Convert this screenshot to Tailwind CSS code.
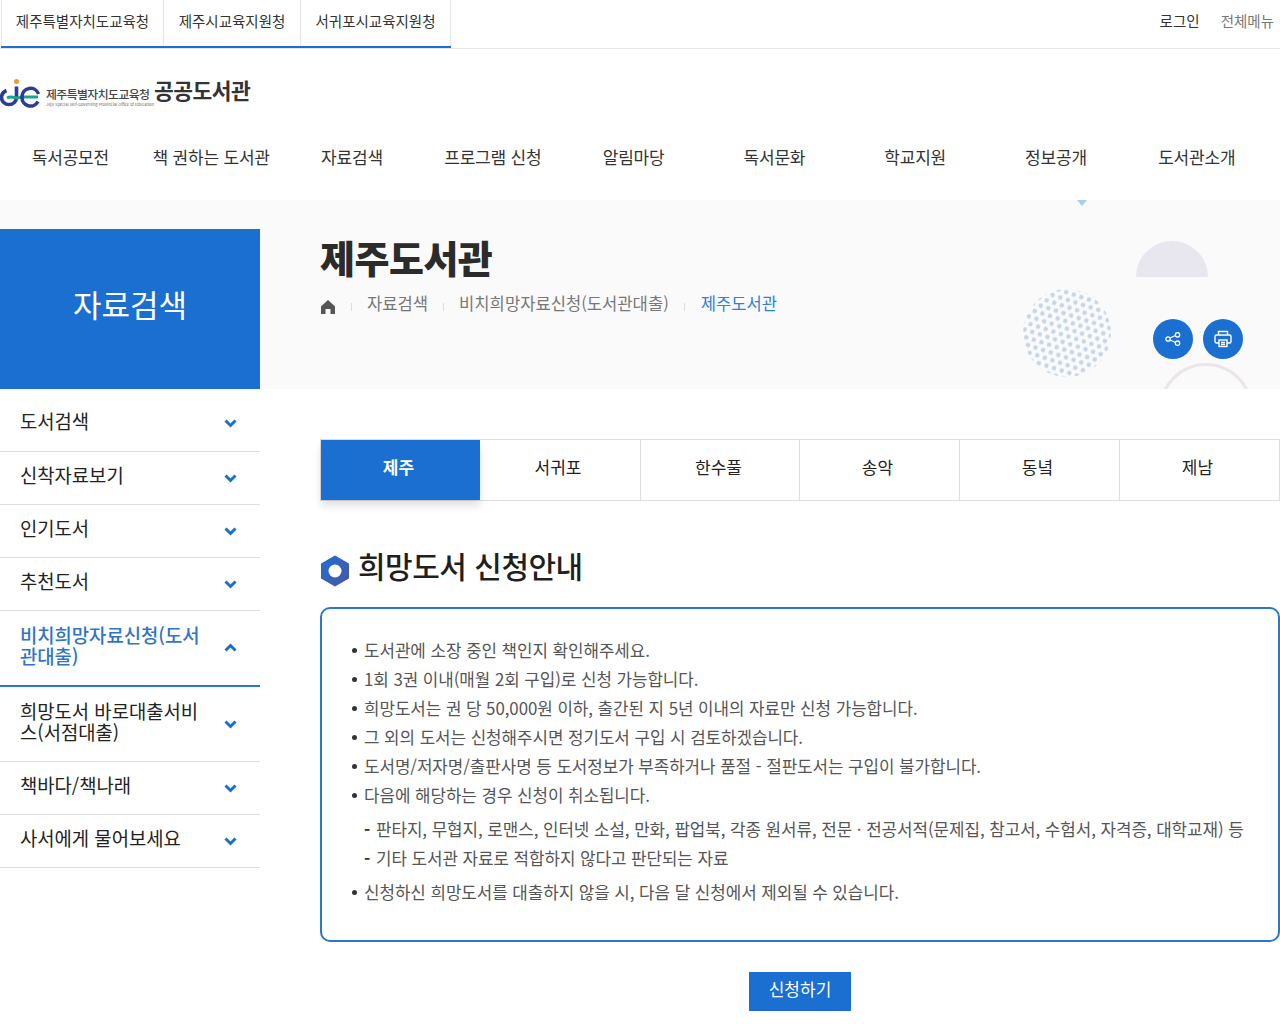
<!DOCTYPE html>
<html lang="ko">
<head>
<meta charset="UTF-8">
<title>제주도서관</title>
<script src="https://cdn.jsdelivr.net/npm/@tailwindcss/browser@4"></script>
</head>
<body class="bg-white font-['Noto_Sans_CJK_KR','Noto_Sans',sans-serif] text-[#222] overflow-hidden">
<div class="w-[1280px] h-[1024px] overflow-hidden">
  <!-- top bar -->
  <div class="h-[49px] border-b border-[#e8e8e8] flex justify-between">
    <div class="flex h-[48px] ml-[1px] border-b-2 border-[#1a6fd0] text-[14.5px] text-[#333]">
      <a class="w-[163px] border-r border-[#e5e5e5] border-l flex items-center justify-center pb-[5px]">제주특별자치도교육청</a>
      <a class="w-[137px] border-r border-[#e5e5e5] flex items-center justify-center pb-[5px]">제주시교육지원청</a>
      <a class="w-[150px] border-r border-[#e5e5e5] flex items-center justify-center pb-[5px]">서귀포시교육지원청</a>
    </div>
    <div class="flex gap-[21px] items-center pb-[7px] text-[14.5px] pr-[6px]">
      <a class="text-[#333]">로그인</a>
      <a class="text-[#777]">전체메뉴</a>
    </div>
  </div>
  <!-- logo -->
  <div class="h-[87px] flex items-center pb-[2px]">
    <svg width="42" height="30" viewBox="0 78 42 30" class="mt-[2px]">
      <circle cx="16.500" cy="81.500" r="2.500" fill="#f09a2c"/>
      <path d="M16.500 86.500v11a7.500 7 0 1 1-15 0c0-3 1.500-5.500 5-7" fill="none" stroke="#2a3c96" stroke-width="3.600"/>
      <path d="M7 98c6-3 9 2 14-1h17" fill="none" stroke="#17a58c" stroke-width="3"/>
      <path d="M22 97a8.500 8.500 0 0 1 16.500-3M22 97a8.500 8.500 0 0 0 16 4.500" fill="none" stroke="#2a3c96" stroke-width="3.600"/>
    </svg>
    <div class="ml-[4px] w-[104px] mt-[10px]">
      <div class="text-[11.900px] leading-[14px] font-medium text-[#444] whitespace-nowrap tracking-[-0.6px]">제주특별자치도교육청</div>
      <div class="text-[4px] leading-[6px] text-[#666] whitespace-nowrap">Jeju Special Self-Governing Provincial Office of Education</div>
    </div>
    <span class="ml-[4px] text-[21.500px] font-bold text-[#333] -mt-[2px] tracking-[-0.5px]">공공도서관</span>
  </div>
  <!-- main nav -->
  <div class="h-[64px] flex items-start text-[17px] tracking-[-0.2px] text-[#333] pt-[8px]">
    <a class="w-[140.800px] text-center">독서공모전</a>
    <a class="w-[140.800px] text-center">책 권하는 도서관</a>
    <a class="w-[140.800px] text-center">자료검색</a>
    <a class="w-[140.800px] text-center">프로그램 신청</a>
    <a class="w-[140.800px] text-center">알림마당</a>
    <a class="w-[140.800px] text-center">독서문화</a>
    <a class="w-[140.800px] text-center">학교지원</a>
    <a class="w-[140.800px] text-center">정보공개</a>
    <a class="w-[140.800px] text-center">도서관소개</a>
  </div>
  <!-- hero -->
  <div class="relative h-[189px] bg-[#fafafb] flex">
    <div class="w-[260px] h-[160px] mt-[29px] bg-[#1a6fd0] text-white text-[31px] flex items-center justify-center pb-[10px]">자료검색</div>
    <div class="pl-[60px] pt-[32px]">
      <h1 class="text-[38px] leading-[50px] font-black text-[#2b2b2b] tracking-[-0.5px]">제주도서관</h1>
      <div class="flex items-center mt-[9px] text-[16.600px] text-[#777] leading-[24px]">
        <svg width="16" height="16" viewBox="0 0 16 16" class="mt-[7px]"><path d="M8 1 1 7.500V15h4.500v-5h5v5H15V7.500Z" fill="#555"/></svg>
        <span class="w-px h-[8px] bg-[#ddd] mx-[15px] mt-[7px]"></span>
        <span>자료검색</span>
        <span class="w-px h-[8px] bg-[#ddd] mx-[15px] mt-[7px]"></span>
        <span>비치희망자료신청(도서관대출)</span>
        <span class="w-px h-[8px] bg-[#ddd] mx-[15.500px] mt-[7px]"></span>
        <span class="text-[#2f80dd]">제주도서관</span>
      </div>
    </div>
    <!-- decorations -->
    <svg width="10" height="6" viewBox="0 0 10 6" class="absolute left-[1077px] top-0"><path d="M0 0h10L5 6Z" fill="#a9cdea"/></svg>
    <div class="absolute left-[1136px] top-[41px] w-[72px] h-[36px] rounded-t-full bg-[#e8e6ee]"></div>
    <svg width="88" height="88" viewBox="0 0 88 88" class="absolute left-[1023px] top-[89px]">
      <defs>
        <pattern id="dots" width="8" height="13.800" patternUnits="userSpaceOnUse" patternTransform="rotate(18)">
          <circle cx="2" cy="3.450" r="2.300" fill="#c4d6e8"/>
          <circle cx="6" cy="10.350" r="2.300" fill="#c4d6e8"/>
        </pattern>
      </defs>
      <circle cx="44" cy="44" r="44" fill="url(#dots)"/>
    </svg>
    <div class="absolute left-[1159px] top-[163px] w-[94px] h-[26px] overflow-hidden"><div class="w-[94px] h-[94px] rounded-full border-[3px] border-[#ebe6ea]"></div></div>
    <div class="absolute left-[1153px] top-[119px] w-[40px] h-[40px] rounded-full bg-[#1a6fd0] flex items-center justify-center">
      <svg width="16" height="14" viewBox="0 0 16 14" fill="none" stroke="white" stroke-width="1.300"><circle cx="3" cy="7" r="2.200"/><circle cx="12.500" cy="2.800" r="2.200"/><circle cx="12.500" cy="11.200" r="2.200"/><path d="M5 6 10.500 3.500M5 8l5.500 2.500"/></svg>
    </div>
    <div class="absolute left-[1203px] top-[119px] w-[40px] h-[40px] rounded-full bg-[#1a6fd0] flex items-center justify-center">
      <svg width="18" height="18" viewBox="0 0 18 18" fill="none" stroke="white" stroke-width="1.400"><path d="M4.500 5V1.500h9V5"/><rect x="1" y="5" width="16" height="8" rx="1.500"/><rect x="5" y="10" width="8" height="6.500" fill="#1a6fd0"/><path d="M7 12.500h4M7 14.500h4"/></svg>
    </div>
  </div>
  <!-- body -->
  <div class="flex">
    <div class="w-[260px] text-[18.800px] leading-[21px] shrink-0">
      <div class="h-[63px] border-b border-[#ddd] flex items-center justify-between pl-[20px] pr-[23px] pt-[7px]"><span class="mb-[6px]">도서검색</span><svg width="13" height="9" viewBox="0 0 13 9" fill="none" stroke="#1a6fd0" stroke-width="3"><path d="M1.500 1.500 6.500 6.500l5-5"/></svg></div>
      <div class="h-[53px] border-b border-[#ddd] flex items-center justify-between pl-[20px] pr-[23px]"><span class="mb-[7px]">신착자료보기</span><svg width="13" height="9" viewBox="0 0 13 9" fill="none" stroke="#1a6fd0" stroke-width="3"><path d="M1.500 1.500 6.500 6.500l5-5"/></svg></div>
      <div class="h-[53px] border-b border-[#ddd] flex items-center justify-between pl-[20px] pr-[23px]"><span class="mb-[7px]">인기도서</span><svg width="13" height="9" viewBox="0 0 13 9" fill="none" stroke="#1a6fd0" stroke-width="3"><path d="M1.500 1.500 6.500 6.500l5-5"/></svg></div>
      <div class="h-[53px] border-b border-[#ddd] flex items-center justify-between pl-[20px] pr-[23px]"><span class="mb-[7px]">추천도서</span><svg width="13" height="9" viewBox="0 0 13 9" fill="none" stroke="#1a6fd0" stroke-width="3"><path d="M1.500 1.500 6.500 6.500l5-5"/></svg></div>
      <div class="h-[76px] border-b-2 border-[#2b78c9] flex items-center justify-between pl-[20px] pr-[23px] text-[#2f74c8] font-medium"><span class="w-[190px] mb-[7px]">비치희망자료신청(도서관대출)</span><svg width="13" height="9" viewBox="0 0 13 9" fill="none" stroke="#1a6fd0" stroke-width="3" class="-mt-[2px]"><path d="M1.500 7.500 6.500 2.500l5 5"/></svg></div>
      <div class="h-[75px] border-b border-[#ddd] flex items-center justify-between pl-[20px] pr-[23px]"><span class="w-[190px] mb-[7px]">희망도서 바로대출서비스(서점대출)</span><svg width="13" height="9" viewBox="0 0 13 9" fill="none" stroke="#1a6fd0" stroke-width="3"><path d="M1.500 1.500 6.500 6.500l5-5"/></svg></div>
      <div class="h-[53px] border-b border-[#ddd] flex items-center justify-between pl-[20px] pr-[23px]"><span class="mb-[7px]">책바다/책나래</span><svg width="13" height="9" viewBox="0 0 13 9" fill="none" stroke="#1a6fd0" stroke-width="3"><path d="M1.500 1.500 6.500 6.500l5-5"/></svg></div>
      <div class="h-[53px] border-b border-[#ddd] flex items-center justify-between pl-[20px] pr-[23px]"><span class="mb-[7px]">사서에게 물어보세요</span><svg width="13" height="9" viewBox="0 0 13 9" fill="none" stroke="#1a6fd0" stroke-width="3"><path d="M1.500 1.500 6.500 6.500l5-5"/></svg></div>
    </div>
    <div class="ml-[60px] w-[960px] pt-[50px]">
      <div class="flex h-[62px] border border-[#ddd] text-[17px] text-[#222]">
        <a class="w-[159px] h-[60px] bg-[#1a6fd0] text-white font-bold flex items-center justify-center shadow-[0_6px_8px_rgba(0,0,0,0.12)] pb-[6px] pr-[4px]">제주</a>
        <a class="w-[161px] border-r border-[#ddd] flex items-center justify-center pb-[6px] pr-[4px]">서귀포</a>
        <a class="w-[159px] border-r border-[#ddd] flex items-center justify-center pb-[6px] pr-[3px]">한수풀</a>
        <a class="w-[160px] border-r border-[#ddd] flex items-center justify-center pb-[6px] pr-[4px]">송악</a>
        <a class="w-[160px] border-r border-[#ddd] flex items-center justify-center pb-[6px] pr-[4px]">동녘</a>
        <a class="flex-1 flex items-center justify-center pb-[6px] pr-[4px]">제남</a>
      </div>
      <div class="flex items-center mt-[44px] h-[46px]">
        <svg width="30" height="32" viewBox="0 0 30 32" class="mt-[6px]">
          <defs><linearGradient id="hex" x1="0" y1="0" x2="1" y2="1"><stop offset="0" stop-color="#1f6fd0"/><stop offset="1" stop-color="#4a55a8"/></linearGradient></defs>
          <path fill-rule="evenodd" d="M15 1.500 28 9v14L15 30.500 2 23V9Z" fill="url(#hex)" stroke="url(#hex)" stroke-width="2" stroke-linejoin="round"/>
          <circle cx="15" cy="16" r="6.500" fill="white"/>
        </svg>
        <h2 class="ml-[8px] text-[30px] leading-[40px] font-medium text-[#1f1f1f] tracking-[-0.5px] -mt-[6px]">희망도서 신청안내</h2>
      </div>
      <div class="mt-[16px] h-[335px] border-2 border-[#2b78c9] rounded-[10px] pl-[30px] pr-[20px] pt-[26px] text-[16.850px] text-[#555] leading-[29px] tracking-[-0.05px]">
        <ul class="flex flex-col">
          <li class="flex items-start gap-[7px]"><span class="w-[5px] h-[5px] mt-[13px] rounded-full bg-[#333] shrink-0"></span><span>도서관에 소장 중인 책인지 확인해주세요.</span></li>
          <li class="flex items-start gap-[7px]"><span class="w-[5px] h-[5px] mt-[13px] rounded-full bg-[#333] shrink-0"></span><span>1회 3권 이내(매월 2회 구입)로 신청 가능합니다.</span></li>
          <li class="flex items-start gap-[7px]"><span class="w-[5px] h-[5px] mt-[13px] rounded-full bg-[#333] shrink-0"></span><span>희망도서는 권 당 50,000원 이하, 출간된 지 5년 이내의 자료만 신청 가능합니다.</span></li>
          <li class="flex items-start gap-[7px]"><span class="w-[5px] h-[5px] mt-[13px] rounded-full bg-[#333] shrink-0"></span><span>그 외의 도서는 신청해주시면 정기도서 구입 시 검토하겠습니다.</span></li>
          <li class="flex items-start gap-[7px]"><span class="w-[5px] h-[5px] mt-[13px] rounded-full bg-[#333] shrink-0"></span><span>도서명/저자명/출판사명 등 도서정보가 부족하거나 품절 - 절판도서는 구입이 불가합니다.</span></li>
          <li class="flex items-start gap-[7px]"><span class="w-[5px] h-[5px] mt-[13px] rounded-full bg-[#333] shrink-0"></span><div><div>다음에 해당하는 경우 신청이 취소됩니다.</div>
            <div class="mt-[5px] whitespace-nowrap flex"><span class="w-[12px] font-bold text-[#333]">-</span><span>판타지, 무협지, 로맨스, 인터넷 소설, 만화, 팝업북, 각종 원서류, 전문 · 전공서적(문제집, 참고서, 수험서, 자격증, 대학교재) 등</span></div>
            <div class="whitespace-nowrap flex"><span class="w-[12px] font-bold text-[#333]">-</span><span>기타 도서관 자료로 적합하지 않다고 판단되는 자료</span></div></div>
          </li>
          <li class="flex items-start gap-[7px] mt-[5px]"><span class="w-[5px] h-[5px] mt-[13px] rounded-full bg-[#333] shrink-0"></span><span>신청하신 희망도서를 대출하지 않을 시, 다음 달 신청에서 제외될 수 있습니다.</span></li>
        </ul>
      </div>
      <div class="flex justify-center mt-[30px]">
        <a class="w-[102px] h-[39px] bg-[#1a6fd0] text-white text-[17px] flex items-center justify-center pb-[5px]">신청하기</a>
      </div>
    </div>
  </div>
</div>
</body>
</html>
